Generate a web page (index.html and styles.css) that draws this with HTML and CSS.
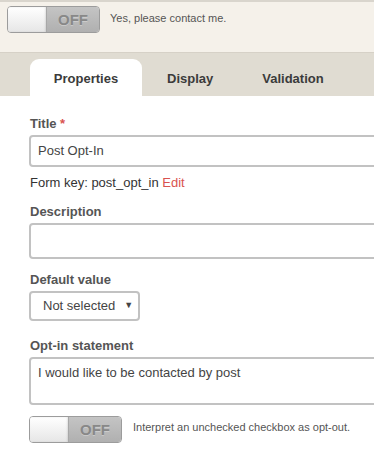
FILE: index.html
```html
<!DOCTYPE html>
<html lang="en">
<head>
    <meta charset="UTF-8">
    <meta name="viewport" content="width=device-width, initial-scale=1.0">
    <title>Field settings</title>
    <link rel="stylesheet" href="styles.css">
</head>
<body>
    <!-- Preview -->
    <div class="preview">
        <div class="toggle">
            <div class="knob"></div>
            <div class="state">OFF</div>
        </div>
        <div class="hint">Yes, please contact me.</div>
    </div>

    <!-- Tabs -->
    <div class="tabs">
        <div class="tab active">Properties</div>
        <div class="tab">Display</div>
        <div class="tab">Validation</div>
    </div>

    <!-- Properties -->
    <div class="content">
        <div class="field">
            <label>Title <span class="req">*</span></label>
            <div class="input">Post Opt-In</div>
            <div class="form-key">Form key: post_opt_in <span class="edit">Edit</span></div>
        </div>

        <div class="field">
            <label>Description</label>
            <div class="input tall"></div>
        </div>

        <div class="field">
            <label>Default value</label>
            <div class="select">Not selected <span class="arrow">&#9660;</span></div>
        </div>

        <div class="field statement">
            <label>Opt-in statement</label>
            <div class="input area">I would like to be contacted by post</div>
        </div>

        <div class="option">
            <div class="toggle">
                <div class="knob"></div>
                <div class="state">OFF</div>
            </div>
            <div class="hint">Interpret an unchecked checkbox as opt-out.</div>
        </div>
    </div>
</body>
</html>
```

FILE: styles.css
```css
body {
    margin: 0;
    font-family: "Liberation Sans", Arial, sans-serif;
    font-size: 13px;
    color: #444;
    background: #fff;
    overflow: hidden;
}

/* Vista previa */
.preview {
    background-color: #f5f1ea;
    border-top: 2px solid #d9d5cd;
    border-bottom: 1px solid #d6d1c7;
    height: 53px;
    padding: 4px 0 0 7px;
    box-sizing: border-box;
    display: flex;
    align-items: flex-start;
}

.preview .hint {
    margin: 6px 0 0 10px;
}

.hint {
    font-size: 11px;
    color: #555;
}

/* Interruptor */
.toggle {
    width: 93px;
    height: 27px;
    box-sizing: border-box;
    border: 1px solid #9c9c9c;
    border-radius: 4px;
    display: flex;
    overflow: hidden;
    flex-shrink: 0;
}

.toggle .knob {
    width: 38px;
    background: linear-gradient(#ffffff, #e6e6e6);
    border-right: 1px solid #a8a8a8;
    box-shadow: inset -1px 0 2px rgba(0, 0, 0, 0.1);
}

.toggle .state {
    flex: 1;
    background: linear-gradient(#c4c4c4, #b0b0b0);
    color: #888;
    font-weight: bold;
    font-size: 15px;
    line-height: 25px;
    text-align: center;
    text-shadow: 0 1px 0 rgba(255, 255, 255, 0.3);
}

/* Pestañas */
.tabs {
    background-color: #e0dcd2;
    height: 43px;
    padding-left: 30px;
    display: flex;
    align-items: flex-end;
}

.tab {
    height: 37px;
    padding: 0 24px 0 25px;
    font-weight: bold;
    font-size: 13px;
    color: #3b3b3b;
    line-height: 39px;
    box-sizing: border-box;
}

.tab.active {
    background: #fff;
    border-radius: 9px 9px 0 0;
    width: 112px;
    text-align: center;
    padding: 0;
}

/* Contenido */
.content {
    padding: 20px 0 0 29px;
}

.field {
    margin-bottom: 13px;
}

.field label {
    display: block;
    font-weight: bold;
    color: #555;
    line-height: 16px;
    margin: 0 0 3px 1px;
}

.req {
    color: #d9534f;
}

.input {
    width: 400px;
    height: 32px;
    box-sizing: border-box;
    border: 2px solid #c2c2c2;
    border-radius: 4px;
    padding: 0 7px;
    line-height: 28px;
    color: #444;
}

.input.tall {
    height: 36px;
}

.input.area {
    height: 48px;
    line-height: 16px;
    padding-top: 6px;
}

.form-key {
    margin: 8px 0 0 1px;
    line-height: 16px;
    color: #333;
}

.edit {
    color: #d9534f;
}

.select {
    width: 111px;
    height: 30px;
    box-sizing: border-box;
    border: 2px solid #c2c2c2;
    border-radius: 4px;
    padding: 0 0 0 12px;
    line-height: 26px;
    display: flex;
    color: #444;
}

.select .arrow {
    font-size: 9px;
    line-height: 24px;
    margin-left: 9px;
    color: #444;
}

.field.statement {
    margin-top: 17px;
    margin-bottom: 11px;
}

.option {
    display: flex;
    align-items: flex-start;
}

.option .hint {
    margin: 5px 0 0 11px;
}
```
